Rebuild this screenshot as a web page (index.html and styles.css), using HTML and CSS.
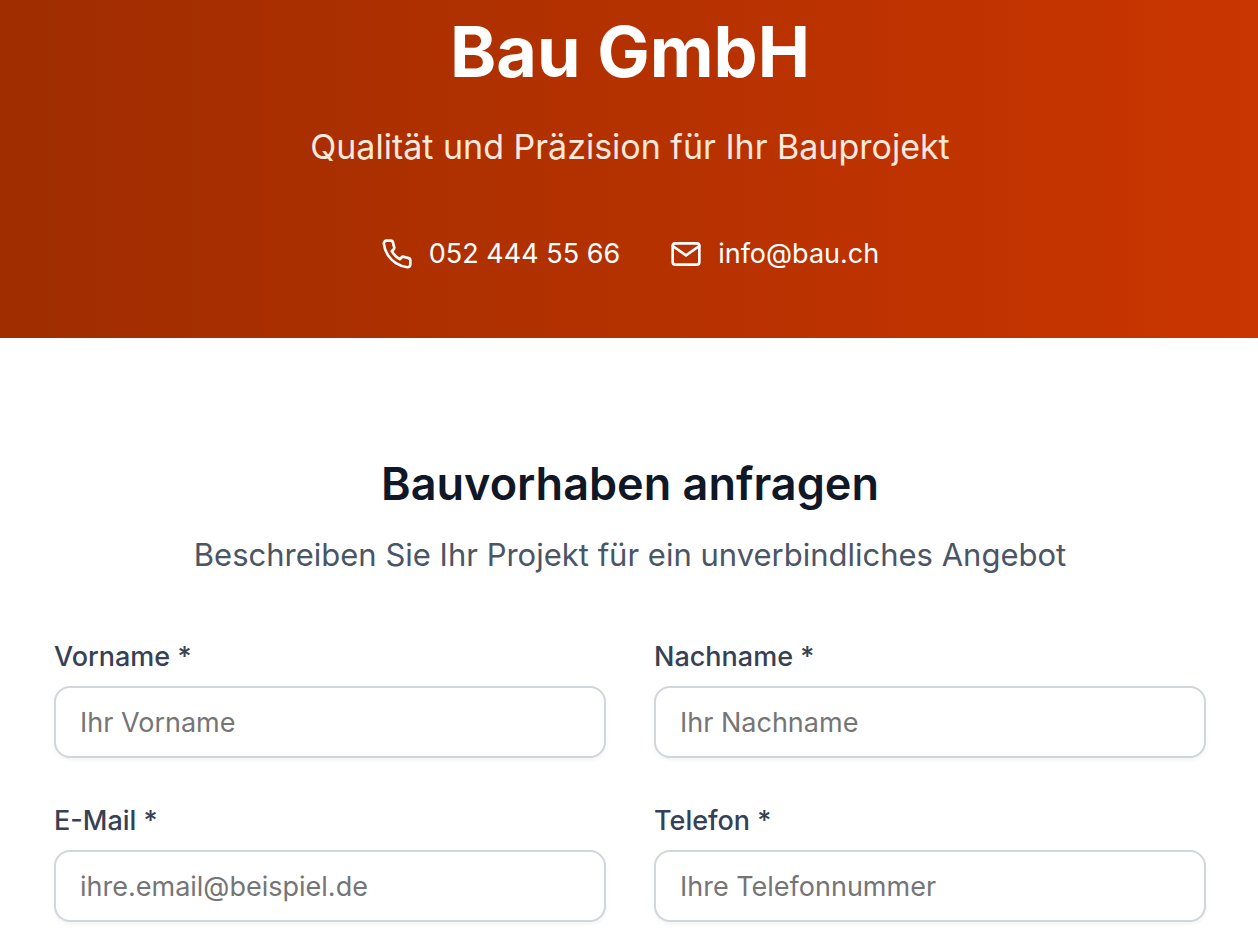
FILE: index.html
```html
<!DOCTYPE html>
<html lang="de">
<head>
    <meta charset="UTF-8">
    <meta name="viewport" content="width=device-width, initial-scale=1.0">
    <title>Bau GmbH</title>
    <link rel="stylesheet" href="styles.css">
</head>
<body>
    <header class="hero">
        <h1>Bau GmbH</h1>
        <p class="slogan">Qualität und Präzision für Ihr Bauprojekt</p>
        <div class="contact">
            <a href="tel:0524445566">
                <svg viewBox="0 0 24 24"><path d="M22 16.92v3a2 2 0 0 1-2.18 2 19.79 19.79 0 0 1-8.63-3.07 19.5 19.5 0 0 1-6-6 19.79 19.79 0 0 1-3.07-8.67A2 2 0 0 1 4.11 2h3a2 2 0 0 1 2 1.72 12.84 12.84 0 0 0 .7 2.81 2 2 0 0 1-.45 2.11L8.09 9.91a16 16 0 0 0 6 6l1.27-1.27a2 2 0 0 1 2.11-.45 12.84 12.84 0 0 0 2.81.7A2 2 0 0 1 22 16.92z"/></svg>
                <span>052 444 55 66</span>
            </a>
            <a href="mailto:info@bau.ch">
                <svg viewBox="0 0 24 24"><rect x="2" y="4" width="20" height="16" rx="2"/><path d="M22 6l-10 7L2 6"/></svg>
                <span>info@bau.ch</span>
            </a>
        </div>
    </header>

    <main class="request">
        <h2>Bauvorhaben anfragen</h2>
        <p class="intro">Beschreiben Sie Ihr Projekt für ein unverbindliches Angebot</p>

        <form class="request-form">
            <div class="field">
                <label for="vorname">Vorname *</label>
                <input type="text" id="vorname" placeholder="Ihr Vorname" required>
            </div>
            <div class="field">
                <label for="nachname">Nachname *</label>
                <input type="text" id="nachname" placeholder="Ihr Nachname" required>
            </div>
            <div class="field">
                <label for="email">E-Mail *</label>
                <input type="email" id="email" placeholder="ihre.email@beispiel.de" required>
            </div>
            <div class="field">
                <label for="telefon">Telefon *</label>
                <input type="tel" id="telefon" placeholder="Ihre Telefonnummer" required>
            </div>
        </form>
    </main>
</body>
</html>
```
FILE: styles.css
```css
* {
    box-sizing: border-box;
}

body {
    margin: 0;
    font-family: Inter, "Liberation Sans", sans-serif;
    background-color: #fff;
    color: #101828;
}

h1, h2, p {
    margin: 0;
}

.hero {
    padding: 16px 52px 64px 54px;
    text-align: center;
    color: #fff;
    background: linear-gradient(to right, #9f2d00, #ca3500);
}

.hero h1 {
    font-size: 70px;
    line-height: 72px;
    font-weight: 700;
}

.slogan {
    margin-top: 32px;
    font-size: 34px;
    line-height: 54px;
    color: #ffe8dc;
}

.contact {
    display: flex;
    justify-content: center;
    gap: 50px;
    margin-top: 60px;
}

.contact a {
    display: flex;
    align-items: center;
    gap: 16px;
    font-size: 27px;
    line-height: 40px;
    color: #fff;
    text-decoration: none;
}

.contact svg {
    width: 32px;
    height: 32px;
    fill: none;
    stroke: currentColor;
    stroke-width: 2;
    stroke-linecap: round;
    stroke-linejoin: round;
}

.request {
    padding: 114px 52px 32px 54px;
}

.request h2 {
    font-size: 45px;
    line-height: 64px;
    font-weight: 600;
    text-align: center;
}

.intro {
    margin-top: 16px;
    font-size: 31px;
    line-height: 46px;
    color: #4a5565;
    text-align: center;
}

.request-form {
    display: grid;
    grid-template-columns: 1fr 1fr;
    gap: 47px 48px;
    margin-top: 63px;
}

.field label {
    display: block;
    margin-bottom: 13px;
    font-size: 27px;
    line-height: 32px;
    font-weight: 500;
    color: #364153;
}

.field input {
    display: block;
    width: 100%;
    height: 72px;
    padding: 0 24px;
    font-family: inherit;
    font-size: 27px;
    color: #101828;
    background-color: #fff;
    border: 2px solid #d1d5dc;
    border-radius: 16px;
    box-shadow: 0 2px 4px rgba(0, 0, 0, 0.05);
}

.field input::placeholder {
    color: #757575;
}
```
